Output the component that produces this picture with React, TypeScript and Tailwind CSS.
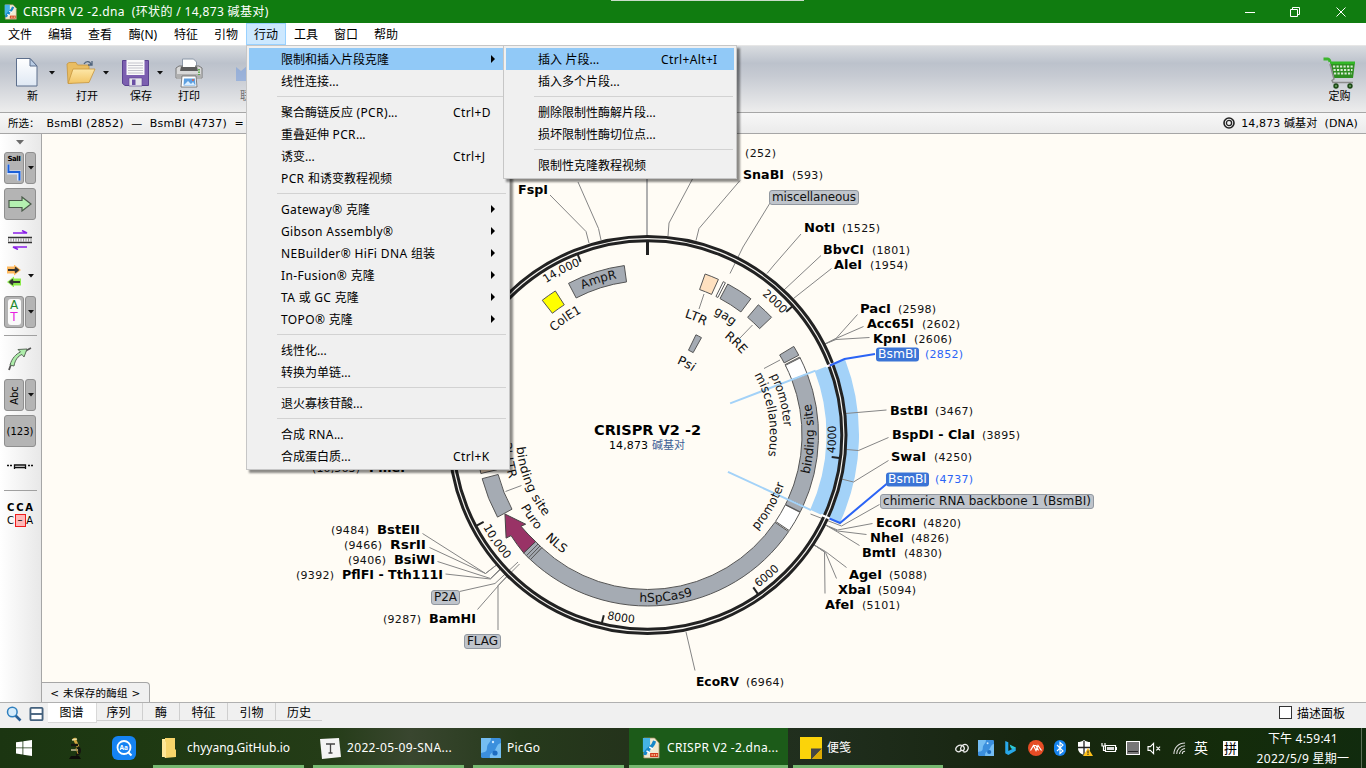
import React from "react";

const UI = "font-['Noto_Sans','Noto_Sans_CJK_SC',sans-serif]";
const VERDANA = "font-['DejaVu_Sans','Noto_Sans_CJK_SC',sans-serif]";

/* ---------- plasmid geometry ---------- */
const CX = 647.5;
const CY = 435;
const LENGTH = 14873;

function pt(r: number, deg: number): [number, number] {
  const a = (deg * Math.PI) / 180;
  return [CX + r * Math.sin(a), CY - r * Math.cos(a)];
}
const fmt = (p: [number, number]) => `${p[0].toFixed(2)} ${p[1].toFixed(2)}`;

function band(a0: number, a1: number, r0 = 154.5, r1 = 171) {
  const big = a1 - a0 > 180 ? 1 : 0;
  return `M${fmt(pt(r1, a0))} A${r1} ${r1} 0 ${big} 1 ${fmt(pt(r1, a1))} L${fmt(pt(r0, a1))} A${r0} ${r0} 0 ${big} 0 ${fmt(pt(r0, a0))} Z`;
}

function Feature(p: { a0: number; a1: number; r0?: number; r1?: number; fill?: string }) {
  return <path d={band(p.a0, p.a1, p.r0, p.r1)} fill={p.fill ?? "#a5abb3"} stroke="#555555" strokeWidth={1} />;
}

function ArcText(p: { id: string; r: number; start: number; ccw?: boolean; len: number; size?: number; children: string }) {
  const s = p.ccw ? -1 : 1;
  const end = p.start + s * 60;
  return (
    <>
      <path id={p.id} d={`M${fmt(pt(p.r, p.start))} A${p.r} ${p.r} 0 0 ${p.ccw ? 0 : 1} ${fmt(pt(p.r, end))}`} fill="none" />
      <text fontSize={p.size ?? 12.3} fill="#111">
        <textPath href={`#${p.id}`} textLength={p.len} lengthAdjust="spacingAndGlyphs">
          {p.children}
        </textPath>
      </text>
    </>
  );
}

function Tick({ bp, r = 185.5, w = 2 }: { bp: number; r?: number; w?: number }) {
  const a = (bp / LENGTH) * 360;
  const [x1, y1] = pt(195, a);
  const [x2, y2] = pt(r, a);
  return <line x1={x1} y1={y1} x2={x2} y2={y2} stroke="#222" strokeWidth={w} />;
}

type Site = { n?: string; x?: number; w?: number; p: string; px: number; pw: number; y: number; sel?: boolean };
const SITES: Site[] = [
  { p: "(252)", px: 745, pw: 31, y: 157 },
  { n: "SnaBI", x: 743, w: 41, p: "(593)", px: 792, pw: 31, y: 179 },
  { n: "NotI", x: 804, w: 31, p: "(1525)", px: 842, pw: 38, y: 232 },
  { n: "BbvCI", x: 823, w: 41, p: "(1801)", px: 872, pw: 38, y: 254 },
  { n: "AleI", x: 834, w: 28, p: "(1954)", px: 870, pw: 38, y: 269 },
  { n: "PacI", x: 860, w: 31, p: "(2598)", px: 898, pw: 38, y: 313 },
  { n: "Acc65I", x: 867, w: 47, p: "(2602)", px: 922, pw: 38, y: 328 },
  { n: "KpnI", x: 873, w: 33, p: "(2606)", px: 914, pw: 38, y: 343 },
  { p: "(2852)", px: 925, pw: 38, y: 358, sel: true },
  { n: "BstBI", x: 890, w: 38, p: "(3467)", px: 935, pw: 38, y: 415 },
  { n: "BspDI - ClaI", x: 892, w: 83, p: "(3895)", px: 982, pw: 38, y: 439 },
  { n: "SwaI", x: 891, w: 35, p: "(4250)", px: 934, pw: 38, y: 461 },
  { p: "(4737)", px: 935, pw: 38, y: 483, sel: true },
  { n: "EcoRI", x: 876, w: 40, p: "(4820)", px: 923, pw: 38, y: 527 },
  { n: "NheI", x: 870, w: 34, p: "(4826)", px: 911, pw: 38, y: 542 },
  { n: "BmtI", x: 862, w: 34, p: "(4830)", px: 904, pw: 38, y: 557 },
  { n: "AgeI", x: 849, w: 33, p: "(5088)", px: 889, pw: 38, y: 579 },
  { n: "XbaI", x: 838, w: 33, p: "(5094)", px: 878, pw: 38, y: 594 },
  { n: "AfeI", x: 825, w: 29, p: "(5101)", px: 862, pw: 38, y: 609 },
  { n: "EcoRV", x: 696, w: 43, p: "(6964)", px: 746, pw: 38, y: 686 },
  { n: "BstEII", x: 377, w: 43, p: "(9484)", px: 331, pw: 38, y: 534 },
  { n: "RsrII", x: 390, w: 36, p: "(9466)", px: 344, pw: 38, y: 549 },
  { n: "BsiWI", x: 394, w: 41, p: "(9406)", px: 348, pw: 38, y: 564 },
  { n: "PflFI - Tth111I", x: 342, w: 101, p: "(9392)", px: 296, pw: 38, y: 579 },
  { n: "BamHI", x: 429, w: 47, p: "(9287)", px: 383, pw: 38, y: 623 },
  { n: "PmeI", x: 369, w: 36, p: "(10,563)", px: 312, pw: 48, y: 471.5 },
];

const LEADERS = [
  "550,195 586,231.5 589,243",
  "578,182 598.5,228.5 601,240",
  "693,178 669,223 668,236",
  "740,180.5 699,228.5 696,240.5",
  "770,203 743,247 730,273.5",
  "801,234 774,265 767,273.5",
  "821,255.5 784,290",
  "831.5,268.5 793.5,298.5",
  "857.5,314.5 836,338.5 825,344",
  "863.5,326.5 836,338.5 825,344",
  "869.5,337.5 836,339.5 825,344",
  "886.5,410 845.5,413.5",
  "888.5,437.5 858.5,450.5 846.5,449.5",
  "888.5,460.5 853.5,482 841.5,479",
  "879.5,504.5 841.5,526 810.5,514",
  "872.5,523.5 837.5,530 825.5,525",
  "866.5,534.5 837.5,531 825.5,525",
  "859.5,545.5 837.5,532 825.5,525",
  "846.5,567.5 825.5,551.5 813.5,544.5",
  "836.5,578.5 825.5,552.5 813.5,544.5",
  "825,593.5 824.5,552 813.5,544.5",
  "695,670.5 686,632",
  "422.5,533.5 485.5,573.5 496.5,565",
  "429.5,547.5 485.5,573.5 496.5,565",
  "437.5,561.5 490.5,578.5 501,568",
  "445.5,574 490.5,579 501,569",
  "459.5,591.5 495,583.5 518,562",
  "477.5,609.5 498.5,585.5 510,573",
  "498,630 498,585.5 519.5,564",
  "704,294 699,309",
  "752.5,325 740,338",
  "764,368.5 780,360",
  "505.5,491.5 521.5,485.5",
];

function PlasmidMap() {
  const a0 = (2852 / LENGTH) * 360;
  const a1 = (4737 / LENGTH) * 360;
  const ray = (a: number, r0: number, r1: number, stroke: string, w: number) => {
    const [x1, y1] = pt(r0, a);
    const [x2, y2] = pt(r1, a);
    return <line x1={x1} y1={y1} x2={x2} y2={y2} stroke={stroke} strokeWidth={w} />;
  };
  const arrow = `M${fmt(pt(154.5, 226.4))} A154.5 154.5 0 0 1 ${fmt(pt(156, 234.2))} L${fmt(pt(151, 233.8))} L${fmt(pt(163, 241))} L${fmt(pt(175, 233.9))} L${fmt(pt(169.5, 233.6))} A171 171 0 0 0 ${fmt(pt(171, 226.4))} Z`;
  return (
    <svg viewBox="42 134 1324 568" width="1324" height="568" className={`block ${VERDANA}`}>
      <path d={band(a0, a1, 179, 211.5)} fill="#a3d2f8" />
      <Feature a0={58.8} a1={62.2} />
      <Feature a0={62.9} a1={63.6} fill="#fff" />
      <Feature a0={63.2} a1={69.1} fill="#fff" />
      <Feature a0={69.1} a1={114.6} />
      <Feature a0={114.6} a1={116.7} />
      <Feature a0={116.9} a1={124} fill="#fff" />
      <Feature a0={124.4} a1={223.2} />
      <Feature a0={223.2} a1={226.4} />
      <Feature a0={224.1} a1={225.1} />
      <path d={arrow} fill="#993366" stroke="#444" strokeWidth={1} />
      <Feature a0={241.3} a1={255.2} />
      <Feature a0={257} a1={262} fill="#f6dcc0" />
      <Feature a0={332.5} a1={352.2} />
      <Feature a0={322} a1={327.4} fill="#ffff00" />
      <Feature a0={19.7} a1={24.5} fill="#ffe1c0" />
      <Feature a0={26.3} a1={27.1} fill="#fff" />
      <Feature a0={28} a1={37.2} />
      <Feature a0={40.4} a1={46.5} />
      <Feature a0={25.8} a1={29} r0={94.2} r1={111.3} />

      {ray(a0, 88.5, 180, "#a3d2f8", 2)}
      {ray(a1, 88.5, 180, "#a3d2f8", 2)}

      {LEADERS.map((d) => (
        <polyline key={d} points={d} fill="none" stroke="#858585" strokeWidth={1} />
      ))}
      <line x1="647" y1="178" x2="647" y2="236" stroke="#b0b0b0" strokeWidth={2} />

      <circle cx={CX} cy={CY} r={196.4} fill="none" stroke="#f6f4f0" strokeWidth={3} />
      <circle cx={CX} cy={CY} r={198.5} fill="none" stroke="#222" strokeWidth={3} />
      <circle cx={CX} cy={CY} r={194.3} fill="none" stroke="#222" strokeWidth={3} />
      {ray(a0, 191, 201, "#ffffff", 2.2)}
      {ray(a1, 191, 201, "#ffffff", 2.2)}
      {ray(a0, 194, 199, "#d88adf", 0.8)}
      <Tick bp={0} r={180} w={3} />
      {[2000, 4000, 6000, 8000, 10000, 14000].map((b) => (
        <Tick key={b} bp={b} />
      ))}

      <polyline points="875,354 844.5,359 830,365.5" fill="none" stroke="#2b64f5" strokeWidth={2} />
      <polyline points="886.5,484 840,523 829.5,518.5" fill="none" stroke="#2b64f5" strokeWidth={2} />

      <ArcText id="t2" r={181} start={39.3} len={28} size={11.3}>2000</ArcText>
      <ArcText id="t4" r={188.5} start={95.6} len={28} size={11.3} ccw>4000</ArcText>
      <ArcText id="t6" r={188.5} start={144} len={28} size={11.3} ccw>6000</ArcText>
      <ArcText id="t8" r={188.5} start={192.5} len={28} size={11.3} ccw>8000</ArcText>
      <ArcText id="t10" r={188.5} start={240.8} len={40} size={11.3} ccw>10,000</ArcText>
      <ArcText id="t14" r={182.5} start={326.2} len={39} size={11.3}>14,000</ArcText>
      <ArcText id="f1" r={145} start={267} len={37} ccw>{"3' LTR"}</ArcText>
      <ArcText id="f2" r={131.6} start={264.8} len={76} ccw>binding site</ArcText>
      <ArcText id="f3" r={146} start={240.3} len={28} ccw>Puro</ArcText>
      <ArcText id="f4" r={145.5} start={224.8} len={24} ccw>NLS</ArcText>
      <ArcText id="f5" r={167} start={182.8} len={54} ccw>hSpCas9</ArcText>
      <ArcText id="f6" r={166.5} start={103.6} len={71} ccw>binding site</ArcText>
      <ArcText id="f7" r={136.5} start={64.2} len={53}>promoter</ArcText>
      <ArcText id="f8" r={122.5} start={60.6} len={84}>miscellaneous</ArcText>
      <ArcText id="f9" r={145.5} start={131} len={54} ccw>promoter</ArcText>
      <ArcText id="f10" r={159.5} start={336} len={36}>AmpR</ArcText>
      <ArcText id="f11" r={139} start={317.8} len={34}>ColE1</ArcText>
      <ArcText id="f12" r={123.5} start={17.3} len={22.5}>LTR</ArcText>
      <ArcText id="f13" r={138.5} start={28.5} len={23}>gag</ArcText>
      <ArcText id="f14" r={124.3} start={38} len={25}>RRE</ArcText>
      <ArcText id="f15" r={77.4} start={22} len={18}>Psi</ArcText>

      <text x={518} y={194} fontSize={12} fontWeight={700} textLength={30} lengthAdjust="spacingAndGlyphs">FspI</text>
      {SITES.map((s) => (
        <g key={s.p}>
          {s.n && (
            <text x={s.x} y={s.y} fontSize={12} fontWeight={700} textLength={s.w} lengthAdjust="spacingAndGlyphs" fill="#000">
              {s.n}
            </text>
          )}
          <text x={s.px} y={s.y} fontSize={11} textLength={s.pw} fill={s.sel ? "#2b64f5" : "#111"}>
            {s.p}
          </text>
        </g>
      ))}

      <rect x="876" y="347.5" width="43" height="14" rx="3" fill="#3b74d6" />
      <text x="878" y="358" fontSize={12} fill="#fff" textLength={39} lengthAdjust="spacingAndGlyphs">BsmBI</text>
      <rect x="886" y="472.5" width="43" height="14" rx="3" fill="#3b74d6" />
      <text x="888" y="483" fontSize={12} fill="#fff" textLength={39} lengthAdjust="spacingAndGlyphs">BsmBI</text>
      <g fill="#bfc4cb" stroke="#9298a0">
        <rect x="769.5" y="190.5" width="89" height="14" rx="2.5" />
        <rect x="880.5" y="494.5" width="213" height="14" rx="2.5" />
        <rect x="431.5" y="590.5" width="28" height="14" rx="2.5" />
        <rect x="464.5" y="634.5" width="36" height="14" rx="2.5" />
      </g>
      <g fontSize={12} fill="#111">
        <text x="772" y="201" textLength={84}>miscellaneous</text>
        <text x="883" y="505" textLength={208}>chimeric RNA backbone 1 (BsmBI)</text>
        <text x="434" y="601" textLength={23}>P2A</text>
        <text x="467" y="645" textLength={31}>FLAG</text>
      </g>
      <text x="594" y="435" fontSize={13.5} fontWeight={700} textLength={107} lengthAdjust="spacingAndGlyphs">CRISPR V2 -2</text>
      <text x="609" y="449" fontSize={11} textLength={39}>14,873</text>
      <text x="652" y="449" fontSize={11} textLength={33} fill="#3c5f96">碱基对</text>
    </svg>
  );
}

/* ---------- icons ---------- */
function DnaFileIcon({ className }: { className: string }) {
  return (
    <svg viewBox="0 0 20 22" preserveAspectRatio="none" className={className}>
      <path d="M2 1h12l5 5v15H2z" fill="#f2ead2" stroke="#a08a5a" strokeWidth=".8" />
      <path d="M1 1h8v14H1z" fill="#45b3e6" />
      <path d="M3 18C4 11 12 12 14 4" stroke="#1687c9" strokeWidth="3.4" fill="none" />
      <path d="M5 14l4 2M8 10l4 2" stroke="#fff" strokeWidth="1.4" />
      <path d="M9 16h9v4H9z" fill="#d33a1c" />
      <path d="M10.500 18h1.500m1 0h1.500m1 0H17" stroke="#ffd9a0" strokeWidth="1.500" />
    </svg>
  );
}
const Down = ({ className = "" }: { className?: string }) => (
  <svg viewBox="0 0 6 4" className={`h-[4px] w-[6px] shrink-0 ${className}`}>
    <path d="M0 0h6L3 3.600z" fill="#111" />
  </svg>
);
function NewIcon() {
  return (
    <svg viewBox="0 0 24 31" className="h-[31px] w-[24px]">
      <defs>
        <linearGradient id="ng" x1="0" y1="0" x2="0" y2="1"><stop offset="0" stopColor="#fff" /><stop offset="1" stopColor="#dfe8f4" /></linearGradient>
      </defs>
      <path d="M1.500 1.500h13.500l7 7.500v20h-20.500z" fill="url(#ng)" stroke="#5d6f8c" />
      <path d="M15 1.500v7.500h7z" fill="#b9cce4" stroke="#5d6f8c" />
    </svg>
  );
}
function OpenIcon() {
  return (
    <svg viewBox="0 0 30 25" className="h-[25px] w-[30px]">
      <defs>
        <linearGradient id="og" x1="0" y1="0" x2="0" y2="1"><stop offset="0" stopColor="#fde7a8" /><stop offset="1" stopColor="#f2c565" /></linearGradient>
      </defs>
      <path d="M1 4l2-1.500h7l1.500 2.500H23v5L6 23H2z" fill="#e9bd62" stroke="#c7963e" strokeWidth=".8" />
      <path d="M7 9h22l-6 13.500L2 23.500z" fill="url(#og)" stroke="#c7963e" strokeWidth=".8" />
      <path d="M18 4c2-3.500 6-3 7 .5M26 1v4h-4" fill="none" stroke="#50647c" strokeWidth="1.300" />
    </svg>
  );
}
function SaveIcon() {
  return (
    <svg viewBox="0 0 27 28" className="h-[28px] w-[27px]">
      <path d="M.5 1.500h26v25H3l-2.500-2z" fill="#7c5fb0" stroke="#5a4290" />
      <path d="M4.500 1h18v15h-18z" fill="#fafafa" />
      <path d="M6 4h15M6 6.500h15M6 9h15M6 11.500h15M6 14h15" stroke="#c4c4cc" />
      <path d="M7 19h13v8H7z" fill="#e4e4ea" stroke="#5a4290" strokeWidth=".6" />
      <path d="M10 20.500h3.500v5.500H10z" fill="#6a4fa4" />
    </svg>
  );
}
function PrintIcon() {
  return (
    <svg viewBox="0 0 28 30" className="h-[30px] w-[28px]">
      <path d="M7.500 1h11l3 3v7h-14z" fill="#fff" stroke="#8c98a8" />
      <path d="M1 10l3-2h20l3 2v10H1z" fill="#d8d8d8" stroke="#777" />
      <path d="M6 8.500h16l1 4.500H5z" fill="#5d5d5d" />
      <path d="M8 4h12v5H8z" fill="#fff" />
      <path d="M1.500 16h25v5h-25z" fill="#b0b0b0" />
      <path d="M24 11v6" stroke="#43a52f" strokeWidth="1.500" strokeDasharray="1.500 1" />
      <path d="M7 18h14l1 11H6z" fill="#fff" stroke="#666" strokeWidth=".8" />
      <path d="M9 20.500h11l.5 7h-12z" fill="#5c9fe0" />
      <path d="M9 27l4-4 3 3 2-2 2 3z" fill="#d8edff" />
      <circle cx="18" cy="22" r="1" fill="#e35a3c" />
    </svg>
  );
}
function CartIcon() {
  return (
    <svg viewBox="0 0 33 33" className="h-[33px] w-[33px]">
      <path d="M.5 2h4c2 0 2 1 2.500 3" fill="none" stroke="#3cb52d" strokeWidth="3" />
      <path d="M7 5h25l-2 16H11z" fill="#2f8f22" />
      <path d="M7 4.500h25v2.500H7.500z" fill="#32b827" />
      <path d="M10 9.500h20M10.500 13h19M11 16.500h18" stroke="#d9ecd5" strokeWidth="1.900" strokeDasharray="2.200 1.300" />
      <path d="M7 7l4 15-2 1.500 1 2h20" fill="none" stroke="#8b8b8b" strokeWidth="1.500" />
      <circle cx="13" cy="29" r="2.700" fill="#1f4a18" /><circle cx="27" cy="29" r="2.700" fill="#1f4a18" />
      <circle cx="13" cy="29" r="1" fill="#6fa765" /><circle cx="27" cy="29" r="1" fill="#6fa765" />
    </svg>
  );
}
const PicGoIcon = ({ className }: { className: string }) => (
  <svg viewBox="0 0 20 20" className={className}>
    <rect width="20" height="20" rx="1.500" fill="#3b8fdd" />
    <path d="M0 0h10C10 5 6 5 6 10S2 14 0 15zM20 5v15H9c-1-5 3-5 5-8s2-6 6-7z" fill="#74bdf2" />
    <circle cx="14" cy="15" r="2.600" fill="#1d6cc0" /><circle cx="12" cy="4" r="1.200" fill="#cce8ff" />
  </svg>
);

/* Latin runs are set slightly looser than the CJK around them. */
function Mixed({ children }: { children: string }) {
  return (
    <>
      {children.split(/([A-Za-z0-9®+()\- ]+)/).map((s, i) =>
        i % 2 ? <span key={i} className="tracking-[0.37px]">{s}</span> : s,
      )}
    </>
  );
}

/* ---------- menus ---------- */
type Row = { t: string; k?: string; sub?: boolean; hot?: boolean } | null;
const ACTIONS: Row[] = [
  { t: "限制和插入片段克隆", sub: true, hot: true },
  { t: "线性连接..." },
  null,
  { t: "聚合酶链反应 (PCR)...", k: "Ctrl+D" },
  { t: "重叠延伸 PCR..." },
  { t: "诱变...", k: "Ctrl+J" },
  { t: "PCR 和诱变教程视频" },
  null,
  { t: "Gateway® 克隆", sub: true },
  { t: "Gibson Assembly®", sub: true },
  { t: "NEBuilder® HiFi DNA 组装", sub: true },
  { t: "In-Fusion® 克隆", sub: true },
  { t: "TA 或 GC 克隆", sub: true },
  { t: "TOPO® 克隆", sub: true },
  null,
  { t: "线性化..." },
  { t: "转换为单链..." },
  null,
  { t: "退火寡核苷酸..." },
  null,
  { t: "合成 RNA..." },
  { t: "合成蛋白质...", k: "Ctrl+K" },
];
const CLONING: Row[] = [
  { t: "插入 片段...", k: "Ctrl+Alt+I", hot: true },
  { t: "插入多个片段..." },
  null,
  { t: "删除限制性酶解片段..." },
  { t: "损坏限制性酶切位点..." },
  null,
  { t: "限制性克隆教程视频" },
];

function Menu({ rows, className, keyCol }: { rows: Row[]; className: string; keyCol: string }) {
  return (
    <div className={`absolute top-[45px] border border-[#c6c6c6] bg-[#f0f0f0] p-[2px] text-[12px] shadow-[3px_3px_2px_rgba(0,0,0,0.45)] ${className}`}>
      {rows.map((r, i) =>
        r ? (
          <div key={i} className={`flex h-[22px] items-center pl-[32px] leading-[22px] text-black ${r.hot ? "bg-[#91c9f7]" : ""}`}>
            <span className="flex-1 pt-[2px] whitespace-nowrap"><Mixed>{r.t}</Mixed></span>
            {r.k && <span className={`${keyCol} pt-[2px] whitespace-nowrap`}><Mixed>{r.k}</Mixed></span>}
            {r.sub && (
              <svg viewBox="0 0 4 8" className="mr-[12px] h-[8px] w-[4px]"><path d="M0 0l4 4-4 4z" fill="#000" /></svg>
            )}
          </div>
        ) : (
          <div key={i} className="flex h-[9px] items-center pr-px pl-[28px]"><div className="h-px w-full bg-[#d2d2d2]" /></div>
        ),
      )}
    </div>
  );
}

/* ---------- side bar ---------- */
const BTN = "flex h-[32px] items-center justify-center rounded-[3px] border border-[#8f8f8f] bg-[#b4b4b4]";
const DropBtn = ({ children }: { children: React.ReactNode }) => (
  <div className="flex h-[32px] gap-px">
    <div className={`${BTN} w-[20px]`}>{children}</div>
    <div className={`${BTN} w-[11px]`}><Down className="w-[5px]" /></div>
  </div>
);

function SideBar() {
  return (
    <div className={`flex w-[42px] shrink-0 flex-col gap-[4px] border-r border-[#a6a6a6] bg-linear-to-r from-white to-[#e8e8e8] pl-[4px] ${VERDANA}`}>
      <div className="flex h-[14px] items-center pt-[2px] pl-[12px]">
        <svg viewBox="0 0 8 5" className="h-[5px] w-[8px]"><path d="M0 0h8L4 4.500z" fill="#6b6b6b" /></svg>
      </div>
      <DropBtn>
        <div className="flex flex-col items-center">
          <span className="h-[8px] text-[7px] leading-[8px] font-bold tracking-[-0.4px]">SalI</span>
          <svg viewBox="0 0 14 18" className="h-[18px] w-[14px]">
            <path d="M1 1.500v8h11v8" fill="none" stroke="#d7e4fb" strokeWidth="4" /><path d="M1.500 1.500v7.500h11v8.500" fill="none" stroke="#1a5fd8" strokeWidth="2" />
          </svg>
        </div>
      </DropBtn>
      <div className={`${BTN} w-[32px]`}>
        <svg viewBox="0 0 24 16" className="h-[16px] w-[24px]"><path d="M1 4.500h13V1l9 7-9 7v-3.500H1z" fill="#b4f0b0" stroke="#4a5a4a" strokeWidth="1.200" /></svg>
      </div>
      <div className="flex h-[32px] w-[32px] items-center justify-center">
        <svg viewBox="0 0 24 20" className="h-[20px] w-[24px]">
          <path d="M5 3h14l-5-2.500M19 17H5l5 2.500" fill="none" stroke="#8a1fe8" strokeWidth="1.500" />
          <path d="M0 7.500h24M0 12.500h24" stroke="#333" strokeWidth="1.300" /><path d="M0 10h24" stroke="#999" strokeWidth="3.500" strokeDasharray="1 1.500" />
        </svg>
      </div>
      <div className="flex h-[32px] items-center gap-[7px] pl-[3px]">
        <svg viewBox="0 0 14 22" className="h-[22px] w-[14px]">
          <path d="M0 1.500h7V-.5L14 5 7 10.500V8.500H0z" fill="#ffb95e" /><path d="M1 5h10M8 2.500L11 5 8 7.500" stroke="#333" strokeWidth="1.800" fill="none" />
          <path d="M14 13.500H7v-2L0 17l7 5.500v-2h7z" fill="#8ceb4c" /><path d="M13 17H3M6 14.500L3 17l3 2.500" stroke="#333" strokeWidth="1.800" fill="none" />
        </svg>
        <Down className="w-[5px]" />
      </div>
      <DropBtn>
        <div className="flex h-[26px] w-[13px] flex-col items-center rounded-[3px] bg-[#fafafa] text-[12px] leading-[12px]">
          <span className="h-[12px] text-[#1c8a2c]">A</span><span className="h-[12px] text-[#e81fe0]">T</span>
        </div>
      </DropBtn>
      <div className="flex h-[7px] items-center pr-[4px]"><div className="h-px w-full bg-[#a0a0a0]" /></div>
      <div className="flex h-[32px] w-[32px] items-center justify-center">
        <svg viewBox="0 0 24 26" className="h-[26px] w-[24px]">
          <path d="M1 24C4 14 9 9 23 2" fill="none" stroke="#555" strokeWidth="1.800" />
          <path d="M2 19C4 12 8 8 12.500 6L10 3.500 19 3l-3 8-2-2.500C10 10 7 14 6 20z" fill="#aeedaa" stroke="#5a6a5a" />
        </svg>
      </div>
      <DropBtn><span className="-rotate-90 text-[10px]">Abc</span></DropBtn>
      <div className={`${BTN} w-[32px] text-[10px]`}>(123)</div>
      <div className="flex h-[32px] w-[32px] items-center justify-center">
        <svg viewBox="0 0 26 6" className="h-[6px] w-[26px]">
          <path d="M0 1.500h5M21 1.500h5" stroke="#111" strokeWidth="1.500" strokeDasharray="2 1" />
          <path d="M7.500 5V1h11v4M7.500 3.500h11" fill="none" stroke="#111" strokeWidth="1.300" />
        </svg>
      </div>
      <div className="flex h-[7px] items-center pr-[4px]"><div className="h-px w-full bg-[#a0a0a0]" /></div>
      <div className="pt-[3px] pl-[3px] text-[10px] leading-[13px]">
        <div className="flex w-[26px] justify-between font-bold"><span>C</span><span>C</span><span>A</span></div>
        <div className="flex w-[26px] items-center justify-between">
          <span>C</span><span className="h-[13px] w-[11px] border border-[#ee1c1c] bg-[#ffb9b9] text-center leading-[10px]">–</span><span>A</span>
        </div>
      </div>
    </div>
  );
}

/* ---------- task bar ---------- */
function Task({ className, children, icon }: { className: string; children: string; icon: React.ReactNode }) {
  return (
    <div className={`flex h-[40px] items-center border-b-[3px] border-[#76b870] pt-[3px] text-white ${className}`}>
      {icon}
      <span className="whitespace-nowrap">{children}</span>
    </div>
  );
}

function TaskBar() {
  return (
    <div className="flex h-[40px] items-center overflow-hidden bg-[linear-gradient(90deg,#1b3511_0%,#1e3912_10%,#243c17_24%,#39462f_30%,#263a1c_38%,#24331b_46%,#202e1e_60%,#17250f_75%,#142c0b_90%,#112b0e_100%)] text-[12px] text-white">
      <div className="flex w-[48px] justify-center">
        <svg viewBox="0 0 16 16" className="h-[16px] w-[16px]"><path d="M0 2.300L6.500 1.400v6.100H0zM7.300 1.300L16 0v7.500H7.300zM0 8.300h6.500v6.200L0 13.600zM7.300 8.300H16V16l-8.700-1.300z" fill="#fff" /></svg>
      </div>
      <div className="flex w-[53px] justify-center">
        <svg viewBox="0 0 14 23" className="h-[23px] w-[14px]">
          <path d="M6 1l4 9" stroke="#d0a640" strokeWidth="3" /><path d="M4 3l5-1" stroke="#eee0a0" strokeWidth="1.500" />
          <path d="M3 8h7M10 10c3 3 2 7-2 8" stroke="#15150f" strokeWidth="2.500" fill="none" /><path d="M3 13h7" stroke="#c8c09a" strokeWidth="1.500" />
          <path d="M1 22l2-3h8l2 3z" fill="#0e0e0a" /><path d="M8 11l2 6" stroke="#b58b31" />
        </svg>
      </div>
      <div className="flex w-[46px] justify-center">
        <svg viewBox="0 0 24 24" className="h-[24px] w-[24px]">
          <rect width="24" height="24" rx="6" fill="#1583f3" /><circle cx="12" cy="11.500" r="6.500" fill="none" stroke="#fff" strokeWidth="1.800" /><path d="M16.500 16.500l3 3" stroke="#fff" strokeWidth="2" />
          <text x="7.500" y="14" fontSize="6.500" fontWeight="700" fill="#fff">Aa</text>
        </svg>
      </div>
      <Task className="ml-[6px] w-[151px] gap-[11px] pl-[9px]" icon={
        <svg viewBox="0 0 14 20" className="h-[20px] w-[14px]"><path d="M0 1h6v18H0z" fill="#fff0a8" /><path d="M3 0h10v11l1 1v7l-11 1z" fill="#f7d56b" /><path d="M0 1l4 3v16l-4-2z" fill="#ffe797" /></svg>
      }>chyyang.GitHub.io</Task>
      <Task className="ml-[9px] w-[151px] gap-[6px] pl-[7px] tracking-[0.33px]" icon={
        <svg viewBox="0 0 21 21" className="h-[21px] w-[21px]"><path d="M0 1l19-1 2 19-19 2z" fill="#f4f4f4" /><path d="M6 6h9M10.500 6v9M8.500 15h4" stroke="#444" strokeWidth="1.300" /></svg>
      }>2022-05-09-SNA...</Task>
      <Task className="ml-[9px] w-[151px] gap-[6px] pl-[8px] tracking-[0.2px]" icon={<PicGoIcon className="h-[20px] w-[20px]" />}>PicGo</Task>
      <Task className="ml-[5px] w-[159px] gap-[7px] bg-[#1c5b19] pl-[13px] tracking-[0.3px]" icon={<DnaFileIcon className="h-[22px] w-[18px]" />}>CRISPR V2 -2.dna...</Task>
      <Task className="ml-[5px] w-[150px] gap-[5px] pl-[7px]" icon={
        <svg viewBox="0 0 22 22" className="h-[22px] w-[22px]"><path d="M0 0h22v22H0z" fill="#fbd30a" /><path d="M11 11.500h11L12 22h-1z" fill="#454545" /><path d="M22 11.500V22H12z" fill="#dca904" /></svg>
      }>便笺</Task>
      <div className="ml-[12px] flex flex-1 items-center">
        <div className="flex w-[239px] items-center [&>*]:shrink-0">
          <svg viewBox="0 0 14 10" className="h-[10px] w-[14px]"><path d="M6 7.500C3 10.500 0 7.500 1 5s4.500-4 7-2 1 5-1 4.500S5 4 8 2s6 1 5 4-3 3.500-5 2.500" fill="none" stroke="#eee" strokeWidth="1.300" /></svg>
          <PicGoIcon className="ml-[9px] h-[16px] w-[16px]" />
          <svg viewBox="0 0 12 16" className="ml-[11px] h-[14px] w-[11px]"><path d="M0 0l3.500 1.300v10L12 7v4l-8.500 5L0 14z" fill="#28a8ea" /><path d="M5 4l7 3.500-3 2-2.500-1.300z" fill="#2ccbd8" /></svg>
          <svg viewBox="0 0 16 16" className="ml-[12px] h-[16px] w-[16px]"><circle cx="8" cy="8" r="8" fill="#e64c25" /><path d="M2.500 10.500l3-5 2.500 5 2-5 3.500 5M5.500 5.500H8l2.500 5" fill="none" stroke="#fff" strokeWidth="1.200" /></svg>
          <svg viewBox="0 0 12 16" className="ml-[10px] h-[16px] w-[12px]"><rect width="12" height="16" rx="6" fill="#1583f0" /><path d="M3 5l6 6-3 2.500v-11L9 5l-6 6" fill="none" stroke="#fff" strokeWidth="1.100" /></svg>
          <svg viewBox="0 0 16 16" className="ml-[11px] h-[16px] w-[16px]"><path d="M7 0c2 1.500 4 2 6 2v6c0 4-3 6-6 7-3-1-6-3-6-7V2c2 0 4-.5 6-2z" fill="#fff" /><path d="M7 1v14M1 7.500h12" stroke="#222" strokeWidth="1.300" /><path d="M11 8l5 8H6z" fill="#ffc21a" /><path d="M11 10.500v3M11 14v1" stroke="#222" /></svg>
          <svg viewBox="0 0 16 12" className="ml-[8px] h-[12px] w-[16px]"><path d="M4.500 3.500h10v6h-10zM15.500 5v3M1 1v3h3V1M2.500 4v4.500h2" fill="none" stroke="#fff" strokeWidth="1.200" /><path d="M6 5h7v3H6z" fill="#ddd" /></svg>
          <svg viewBox="0 0 14 14" className="ml-[9px] h-[14px] w-[14px]"><rect x=".5" y=".5" width="13" height="13" fill="#777" stroke="#fff" /><path d="M2 10.500h10" stroke="#222" /></svg>
          <svg viewBox="0 0 16 14" className="ml-[7px] h-[13px] w-[15px]"><path d="M1 5h2.500L7 1.500v11L3.500 9H1zM10 5l4 4M14 5l-4 4" fill="none" stroke="#fff" strokeWidth="1.200" /></svg>
          <svg viewBox="0 0 14 14" className="ml-[11px] h-[13px] w-[13px]"><path d="M1 13C1 6 6 1 13 1M4 13c0-5 4-9 9-9M7 13c0-3 3-6 6-6M10 13c0-2 1.500-3 3-3" fill="none" stroke="#ddd" strokeWidth="1.100" /></svg>
        </div>
        <span className="text-[14px] leading-[40px]">英</span>
        <span className="ml-[15px] flex h-[15px] w-[15px] items-center justify-center bg-white text-[13px] leading-[15px] text-black">拼</span>
        <div className="flex-1 pt-px pl-[7px] text-center text-[12px] leading-[20px] whitespace-nowrap">
          <div><Mixed>下午 4:59:41</Mixed></div>
          <div className="tracking-[0.3px]">2022/5/9 星期一</div>
        </div>
        <div className="mr-[4px] h-[40px] w-px bg-[#5d6f58]" />
      </div>
    </div>
  );
}

const MENUS = ["文件", "编辑", "查看", "酶(N)", "特征", "引物", "行动", "工具", "窗口", "帮助"];

export default function App() {
  return (
    <div className={`relative flex h-[768px] w-[1366px] flex-col overflow-hidden bg-[#f0f0f0] text-[12px] text-black ${UI}`}>
      <div className="flex h-[23px] items-center bg-[#107c10] text-white">
        <DnaFileIcon className="ml-[4px] h-[16px] w-[13px]" />
        <span className="ml-[6px] leading-[23px] tracking-[0.35px] whitespace-pre">CRISPR V2 -2.dna  (环状的 / 14,873 碱基对)</span>
        <svg viewBox="0 0 102 12" className="mr-[19px] ml-auto h-[12px] w-[102px]" fill="none" stroke="#fff">
          <path d="M0 6.500h10M45.500 3.500h7v7h-7zM47.500 3v-1.500h7v7H53M91.500 1.500l9 9M100.500 1.500l-9 9" />
        </svg>
      </div>
      <div className="absolute top-0 left-[611px] h-px w-[193px] bg-[#c8dcc8]" />
      <div className="flex h-[22px] bg-white">
        {MENUS.map((m) => (
          <div key={m} className={`flex items-center justify-center ${m === "酶(N)" ? "w-[46px]" : "w-[40px]"} ${m === "行动" ? "border border-[#99d1ff] bg-[#cce8ff] leading-[20px]" : "leading-[22px]"}`}>
            <span className="pt-px">{m}</span>
          </div>
        ))}
      </div>
      <div className="flex h-[67px] items-start border-t border-[#e6e6e6] bg-[linear-gradient(180deg,#d9dce0_0%,#bcc2cc_26%,#c6cad2_45%,#ededed_100%)] pt-[11px] text-[11px]">
        <div className="ml-[15px] h-[50px] w-[42px]">
          <div className="flex h-[31px] items-center"><NewIcon /><Down className="ml-[10px]" /></div>
          <div className="pl-[12px] leading-[16px]">新</div>
        </div>
        <div className="ml-[9px] h-[50px] w-[45px]">
          <div className="flex h-[31px] items-center"><OpenIcon /><Down className="ml-[7px]" /></div>
          <div className="pl-[10px] leading-[16px]">打开</div>
        </div>
        <div className="ml-[11px] h-[50px] w-[44px]">
          <div className="flex h-[31px] items-center"><SaveIcon /><Down className="ml-[8px]" /></div>
          <div className="pl-[8px] leading-[16px]">保存</div>
        </div>
        <div className="ml-[9px] h-[50px] w-[44px]">
          <div className="flex h-[31px] items-center"><PrintIcon /></div>
          <div className="pl-[3px] leading-[16px]">打印</div>
        </div>
        <div className="ml-[17px] h-[50px] w-[44px] opacity-50">
          <div className="flex h-[31px] items-center"><svg viewBox="0 0 20 16" className="h-[16px] w-[20px]"><path d="M0 2l5 4 6-5v15H0z" fill="#6f9ae0" /></svg></div>
          <div className="pl-[4px] leading-[16px]">联机</div>
        </div>
        <div className="mr-[10px] ml-auto flex flex-col items-center">
          <div className="h-[32px]"><CartIcon /></div>
          <div className="leading-[14px]">定购</div>
        </div>
      </div>
      <div className={`flex h-[22px] items-center border-y border-[#a6a6a6] bg-linear-to-b from-[#f7f7f7] to-[#ebebeb] pt-[2px] pr-[8px] pl-[8px] text-[11px] whitespace-pre ${VERDANA}`}>
        <span className="text-[10.5px]">所选：</span>
        <span className="ml-[7px] tracking-[0.2px]">BsmBI (2852)  —  BsmBI (4737)  =  1886 bp</span>
        <svg viewBox="0 0 12 12" className="mr-[6px] mb-[2px] ml-auto h-[12px] w-[12px]" fill="none" stroke="#222"><circle cx="6" cy="6" r="5" strokeWidth="1.600" /><circle cx="6" cy="6" r="2.600" strokeWidth="1.300" /></svg>
        <span className="tracking-[0.12px]">14,873 碱基对  (DNA)</span>
      </div>
      <div className="flex h-[568px]">
        <SideBar />
        <div className="relative h-[568px] w-[1324px] bg-[#fffcf5]">
          <PlasmidMap />
          <div className={`absolute bottom-0 left-0 h-[20px] w-[108px] rounded-tr-[4px] border-t border-r border-[#a6a6a6] bg-[#f0f0f0] text-center text-[10.5px] leading-[20px] tracking-[0.3px] whitespace-pre ${VERDANA}`}>{"< 未保存的酶组 >"}</div>
        </div>
      </div>
      <div className="flex h-[26px] items-start border-t border-[#b0b0b0] bg-[#f0f0f0]">
        <svg viewBox="0 0 16 16" className="mt-[3px] ml-[6px] h-[16px] w-[16px]"><path d="M9.500 9.500l5 5" stroke="#2a5f95" strokeWidth="2.600" /><circle cx="6.300" cy="6" r="4.800" fill="#d6ecfb" stroke="#2f7fbe" strokeWidth="1.500" /></svg>
        <svg viewBox="0 0 15 15" className="mt-[4px] mr-[4px] ml-[7px] h-[14px] w-[15px]"><rect x="1" y="1" width="13" height="13" rx="1" fill="#fff" stroke="#44617d" strokeWidth="2" /><path d="M1 7.500h13" stroke="#44617d" strokeWidth="2" /></svg>
        <div className="h-[20px] w-[49px] border-r border-b border-[#d8d8d8] bg-white pr-px text-center leading-[20px]">图谱</div>
        <div className="h-[18px] w-[46px] border-r border-b border-[#cfcfcf] pr-[2px] text-center leading-[20px]">序列</div>
        <div className="h-[18px] w-[37px] border-r border-b border-[#cfcfcf] text-center leading-[20px]">酶</div>
        <div className="h-[18px] w-[48px] border-r border-b border-[#cfcfcf] text-center leading-[20px]">特征</div>
        <div className="h-[18px] w-[48px] border-r border-b border-[#cfcfcf] text-center leading-[20px]">引物</div>
        <div className="h-[18px] w-[46px] border-b border-[#cfcfcf] text-center leading-[20px]">历史</div>
        <div className="mt-[3px] mr-[5px] ml-auto h-[13px] w-[13px] border border-[#333] bg-white" />
        <div className="mr-[21px] leading-[21px]">描述面板</div>
      </div>
      <TaskBar />
      <Menu rows={ACTIONS} className="left-[246px] w-[264px]" keyCol="w-[54px]" />
      <Menu rows={CLONING} className="left-[503px] w-[234px]" keyCol="w-[73px]" />
    </div>
  );
}
